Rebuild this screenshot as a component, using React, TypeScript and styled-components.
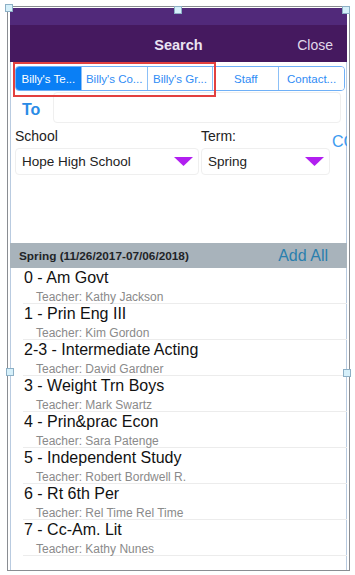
import React from "react";
import styled, { createGlobalStyle } from "styled-components";

const Global = createGlobalStyle`
  html, body { margin: 0; padding: 0; background: #fff; }
  body { font-family: "Liberation Sans", Arial, sans-serif; }
`;

const Frame = styled.div`
  position: relative;
  box-sizing: border-box;
  margin: 6px 0 0 7px;
  width: 343px;
  height: 565px;
  border: 1px solid #8a8d92;
  padding: 1px 2px 0 2px;
`;

const Phone = styled.div`
  position: relative;
  height: 100%;
  overflow: hidden;
  background: #fff;
  box-shadow: inset 1px 0 0 #b9cbe0, inset -1px 0 0 #b9cbe0;
`;

const StatusBand = styled.div`
  height: 17px;
  background: #51297a;
`;

const NavBar = styled.div`
  height: 37px;
  background: #45195f;
  display: flex;
  align-items: center;
  justify-content: center;
  position: relative;
`;

const NavTitle = styled.div`
  color: #ebe4f2;
  font-weight: bold;
  font-size: 14.5px;
  padding-top: 2px;
`;

const NavAction = styled.div`
  position: absolute;
  right: 14px;
  top: 12px;
  color: #e0d8ea;
  font-size: 14px;
`;

const TabsWrap = styled.div`
  padding: 4px 2px 0 5px;
  height: 31px;
  box-sizing: border-box;
`;

const Segmented = styled.div`
  display: flex;
  height: 25px;
  box-sizing: border-box;
  border: 1px solid #6fb0f7;
  border-radius: 4px;
  overflow: hidden;
  width: 330px;
`;

const Segment = styled.div<{ $active?: boolean }>`
  flex: 1;
  display: flex;
  align-items: center;
  justify-content: center;
  font-size: 11.5px;
  color: ${(p) => (p.$active ? "#ffffff" : "#2f8cf5")};
  background: ${(p) => (p.$active ? "#0a7ff5" : "#ffffff")};
  border-left: ${(p) => (p.$active ? "none" : "1px solid #8cc0f7")};
  white-space: nowrap;
  &:first-child { border-left: none; }
`;

const Highlight = styled.div`
  position: absolute;
  left: 3px;
  top: 54px;
  width: 203px;
  height: 35px;
  box-sizing: border-box;
  border: 2px solid #e2403f;
  pointer-events: none;
`;

const ToRow = styled.div`
  display: flex;
  align-items: center;
  height: 31px;
  padding: 0 6px 0 12px;
  gap: 13px;
`;

const ToLabel = styled.div`
  color: #2a8be6;
  font-weight: bold;
  font-size: 16px;
  padding-top: 2px;
`;

const ToInput = styled.div`
  flex: 1;
  height: 31px;
  box-sizing: border-box;
  border: 1px solid #efefef;
  border-radius: 4px;
  margin-top: -3px;
`;

const Fields = styled.div`
  display: flex;
  padding: 2px 0 0 5px;
  gap: 2px;
`;

const Field = styled.div<{ $w: number }>`
  flex: 0 0 ${(p) => p.$w}px;
  display: flex;
  flex-direction: column;
`;

const FieldLabel = styled.div`
  font-size: 14px;
  color: #222;
  height: 22px;
  line-height: 20px;
`;

const Select = styled.div`
  height: 27px;
  box-sizing: border-box;
  border: 1px solid #efefef;
  border-radius: 4px;
  display: flex;
  align-items: center;
  justify-content: space-between;
  padding: 0 5px 0 6px;
  font-size: 13.5px;
  color: #222;
`;

const Extra = styled.div`
  flex: 0 0 auto;
  color: #3d9bf0;
  font-size: 16px;
  margin-top: 7px;
  white-space: nowrap;
`;

const Spacer = styled.div`
  height: 68px;
`;

const SectionHeader = styled.div`
  height: 25px;
  background: #a8b3bb;
  display: flex;
  align-items: center;
  justify-content: space-between;
  padding: 0 19px 0 9px;
`;

const SectionTitle = styled.div`
  font-weight: bold;
  font-size: 11.8px;
  color: #1f2428;
`;

const SectionAction = styled.div`
  color: #2a7fae;
  font-size: 16px;
`;

const Row = styled.div`
  margin-left: 13px;
  padding-left: 1px;
  height: 36px;
  box-sizing: border-box;
  border-bottom: 1px solid #ececec;
  display: flex;
  flex-direction: column;
`;

const RowTitle = styled.div`
  font-size: 16px;
  color: #111;
  line-height: 18px;
  margin-top: 1px;
`;

const RowSub = styled.div`
  font-size: 12px;
  color: #8a8a8a;
  line-height: 14px;
  margin-top: 3px;
  padding-left: 12px;
`;

const Handle = styled.div<{ $x: number; $y: number }>`
  position: absolute;
  left: ${(p) => p.$x}px;
  top: ${(p) => p.$y}px;
  width: 8px;
  height: 8px;
  box-sizing: border-box;
  background: #d6f0fa;
  border: 1px solid #8db0c6;
`;

const Caret = () => (
  <svg width="19" height="9" viewBox="0 0 19 9">
    <polygon points="0,0 19,0 9.5,9" fill="#b11ff0" />
  </svg>
);

const courses = [
  ["0 - Am Govt", "Kathy Jackson"],
  ["1 - Prin Eng III", "Kim Gordon"],
  ["2-3 - Intermediate Acting", "David Gardner"],
  ["3 - Weight Trn Boys", "Mark Swartz"],
  ["4 - Prin&prac Econ", "Sara Patenge"],
  ["5 - Independent Study", "Robert Bordwell R."],
  ["6 - Rt 6th Per", "Rel Time Rel Time"],
  ["7 - Cc-Am. Lit", "Kathy Nunes"],
];

const tabs = ["Billy's Te...", "Billy's Co...", "Billy's Gr...", "Staff", "Contact..."];

export default function App() {
  return (
    <>
      <Global />
      <Frame>
        <Phone>
          <StatusBand />
          <NavBar>
            <NavTitle>Search</NavTitle>
            <NavAction>Close</NavAction>
          </NavBar>
          <TabsWrap>
            <Segmented>
              {tabs.map((t, i) => (
                <Segment key={t} $active={i === 0}>
                  {t}
                </Segment>
              ))}
            </Segmented>
          </TabsWrap>
          <ToRow>
            <ToLabel>To</ToLabel>
            <ToInput />
          </ToRow>
          <Fields>
            <Field $w={184}>
              <FieldLabel>School</FieldLabel>
              <Select>
                <span>Hope High School</span>
                <Caret />
              </Select>
            </Field>
            <Field $w={129}>
              <FieldLabel>Term:</FieldLabel>
              <Select>
                <span>Spring</span>
                <Caret />
              </Select>
            </Field>
            <Extra>CC</Extra>
          </Fields>
          <Spacer />
          <SectionHeader>
            <SectionTitle>Spring (11/26/2017-07/06/2018)</SectionTitle>
            <SectionAction>Add All</SectionAction>
          </SectionHeader>
          {courses.map(([c, t]) => (
            <Row key={c}>
              <RowTitle>{c}</RowTitle>
              <RowSub>Teacher: {t}</RowSub>
            </Row>
          ))}
          <Highlight />
        </Phone>
        <Handle $x={-3} $y={-3} />
        <Handle $x={166} $y={-1} />
        <Handle $x={334} $y={-1} />
        <Handle $x={-2} $y={361} />
        <Handle $x={335} $y={362} />
      </Frame>
    </>
  );
}
